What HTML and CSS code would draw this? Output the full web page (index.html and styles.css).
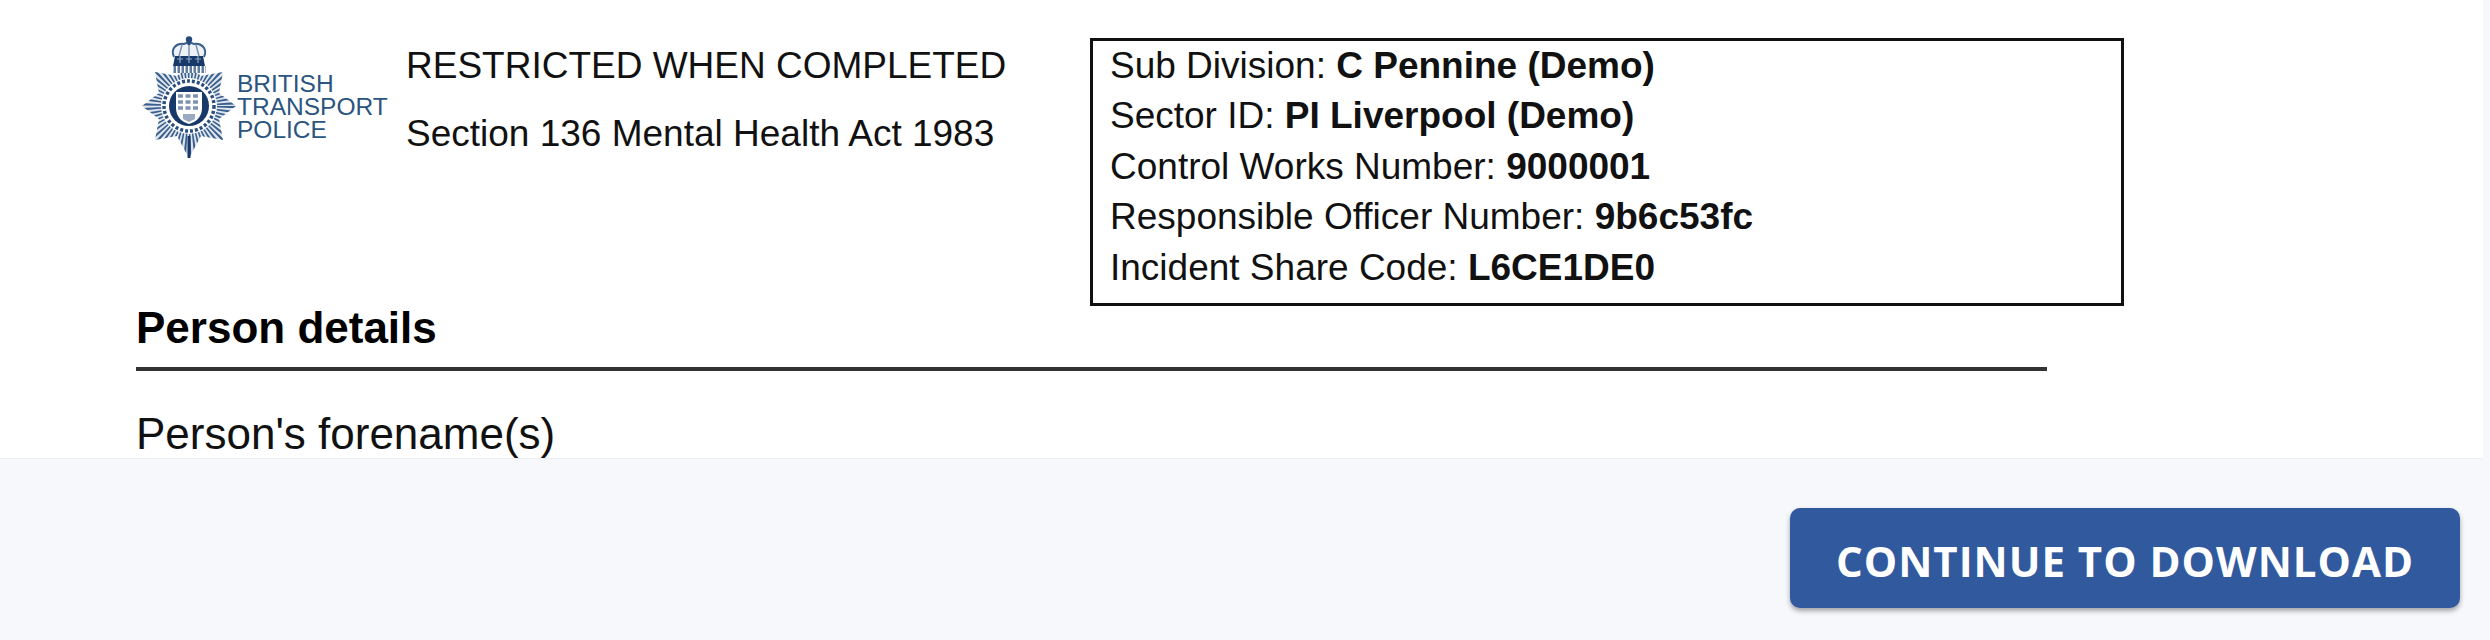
FILE: index.html
```html
<!DOCTYPE html>
<html lang="en">
<head>
    <meta charset="UTF-8">
    <title>Section 136 Form</title>
    <link rel="stylesheet" href="styles.css">
</head>
<body>
    <div class="sheet">
        <div class="form-header">
            <div class="logo">
                <svg class="badge" viewBox="0 0 100 124" width="100" height="124">
                    <defs>
                        <clipPath id="starClip">
                            <polygon points="50,122 62,100 84,104 80,83 97,70 80,57 84,36 62,40 50,30 38,40 16,36 20,57 3,70 20,83 16,104 38,100"/>
                        </clipPath>
                    </defs>
                    <!-- star rays -->
                    <g clip-path="url(#starClip)">
                        <rect x="0" y="26" width="100" height="98" fill="#dfe5ee"/>
                        <circle cx="50" cy="70" r="35" fill="none" stroke="#3a5f8c" stroke-width="54" stroke-dasharray="1.8 2"/>
                    </g>
                    <path d="M50 100v22" stroke="#17396a" stroke-width="3"/>
                    <!-- garter ring -->
                    <circle cx="50" cy="70" r="28" fill="#fff"/>
                    <circle cx="50" cy="70" r="25" fill="none" stroke="#2b5080" stroke-width="3.5" stroke-dasharray="3 2"/>
                    <circle cx="50" cy="70" r="20" fill="#17396a"/>
                    <!-- shield -->
                    <path d="M37 56h26v16c0 9-6 14-13 16-7-2-13-7-13-16z" fill="#fff"/>
                    <path d="M39 60h22M39 66h22M39 72h22" fill="none" stroke="#7d93b0" stroke-width="3.5" stroke-dasharray="5 2.5"/>
                    <path d="M44 78h12v5l-6 3-6-3z" fill="#9aabc1"/>
                    <!-- crown -->
                    <path d="M35 21c-4-9 3-14 10-13l5-2 5 2c7-1 14 4 10 13" fill="#eef1f6" stroke="#3a5f8c" stroke-width="2"/>
                    <path d="M50 7V20M43 9l-3 11M57 9l3 11" fill="none" stroke="#7d93b0" stroke-width="1.5"/>
                    <circle cx="50" cy="3.5" r="3.2" fill="#24497a"/>
                    <rect x="48.5" y="5" width="3" height="4" fill="#24497a"/>
                    <path d="M36 20h28l2 10H34z" fill="#17396a"/>
                    <path d="M38 23h6M47 23h6M56 23h6M41 20v7M50 20v7M59 20v7" stroke="#8fa3bc" stroke-width="1.2"/>
                    <path d="M33 30h34v7H33z" fill="#5f7ca0"/>
                    <path d="M33 33.5h34" stroke="#fff" stroke-width="7" stroke-dasharray="1.5 2.5"/>
                </svg>
                <div class="logo-text">BRITISH<br>TRANSPORT<br>POLICE</div>
            </div>
            <div class="form-title">
                <p>RESTRICTED WHEN COMPLETED</p>
                <p>Section 136 Mental Health Act 1983</p>
            </div>
            <div class="ref-box">
                <div>Sub Division: <b>C Pennine (Demo)</b></div>
                <div>Sector ID: <b>PI Liverpool (Demo)</b></div>
                <div>Control Works Number: <b>9000001</b></div>
                <div>Responsible Officer Number: <b>9b6c53fc</b></div>
                <div>Incident Share Code: <b>L6CE1DE0</b></div>
            </div>
        </div>
        <h2 class="section-title">Person details</h2>
        <div class="field-label">Person's forename(s)</div>
    </div>
    <div class="footer">
        <button class="continue-button">CONTINUE TO DOWNLOAD</button>
    </div>
</body>
</html>
```

FILE: styles.css
```css
html, body {
    margin: 0;
    height: 640px;
    overflow: hidden;
}

body {
    font-family: "Liberation Sans", Arial, sans-serif;
    background: #f7f8fc;
    color: #111;
}

.sheet {
    width: 2483px;
    height: 458px;
    box-sizing: border-box;
    padding: 38px 0 0 136px;
    background: #fff;
    overflow: hidden;
}

.form-header {
    display: flex;
    align-items: flex-start;
}

.logo {
    display: flex;
    align-items: flex-start;
    width: 270px;
    flex: none;
}

.badge {
    flex: none;
    margin: -2px 0 0 3px;
    filter: blur(0.5px);
}

.logo-text {
    margin: 34px 0 0 -2px;
    font-size: 24.5px;
    line-height: 23px;
    color: #2b5580;
}

.form-title {
    width: 684px;
    flex: none;
    padding-top: 7px;
    font-size: 37px;
}

.form-title p {
    margin: 0 0 27px 0;
    line-height: 41px;
}

.ref-box {
    width: 1034px;
    height: 268px;
    flex: none;
    box-sizing: border-box;
    border: 3px solid #111;
    padding: 0 17px;
    font-size: 37px;
    line-height: 50.4px;
}

.section-title {
    width: 1911px;
    margin: -3px 0 0 0;
    padding-bottom: 14px;
    border-bottom: 4px solid #333;
    font-size: 44px;
    line-height: 50px;
    font-weight: bold;
    color: #000;
}

.field-label {
    margin-top: 38px;
    font-size: 44px;
    line-height: 50px;
}

.footer {
    display: flex;
    justify-content: flex-end;
    width: 2483px;
    box-sizing: border-box;
    padding: 49px 23px 0 0;
    border-top: 1px solid #eceef5;
}

.continue-button {
    width: 670px;
    height: 100px;
    padding: 4px 0 0 0;
    border: none;
    border-radius: 10px;
    background: #315a9e;
    color: #fff;
    font-family: "Open Sans", sans-serif;
    font-size: 42px;
    font-weight: 700;
    letter-spacing: 1px;
    box-shadow: 0 3px 5px rgba(0, 0, 0, 0.35);
}
```
